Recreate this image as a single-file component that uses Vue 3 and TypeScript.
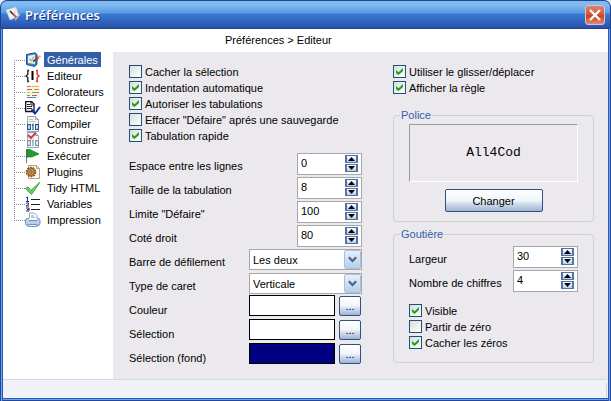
<script setup lang="ts">
import { reactive, ref } from 'vue'

const sections = [
  'Générales', 'Editeur', 'Colorateurs', 'Correcteur', 'Compiler', 'Construire',
  'Exécuter', 'Plugins', 'Tidy HTML', 'Variables', 'Impression',
]
const current = ref('Générales')

interface Option { id: string; label: string; on: boolean }
interface NumberField { id: string; label: string; value: number }

const editing = reactive<Option[]>([
  { id: 'hide-selection', label: 'Cacher la sélection', on: false },
  { id: 'auto-indent', label: 'Indentation automatique', on: true },
  { id: 'allow-tabs', label: 'Autoriser les tabulations', on: true },
  { id: 'clear-undo', label: 'Effacer "Défaire" aprés une sauvegarde', on: false },
  { id: 'quick-tab', label: 'Tabulation rapide', on: true },
])
const display = reactive<Option[]>([
  { id: 'drag-drop', label: 'Utiliser le glisser/déplacer', on: true },
  { id: 'ruler', label: 'Afficher la règle', on: true },
])
const gutter = reactive<Option[]>([
  { id: 'visible', label: 'Visible', on: true },
  { id: 'from-zero', label: 'Partir de zéro', on: false },
  { id: 'hide-zeros', label: 'Cacher les zéros', on: true },
])
const numbers = reactive<NumberField[]>([
  { id: 'spacing', label: 'Espace entre les lignes', value: 0 },
  { id: 'tab-size', label: 'Taille de la tabulation', value: 8 },
  { id: 'undo-limit', label: 'Limite "Défaire"', value: 100 },
  { id: 'right-side', label: 'Coté droit', value: 80 },
])
const gutterNumbers = reactive<NumberField[]>([
  { id: 'gutter-width', label: 'Largeur', value: 30 },
  { id: 'digits', label: 'Nombre de chiffres', value: 4 },
])
const choices = reactive([
  { id: 'scrollbar', label: 'Barre de défilement', value: 'Les deux', options: ['Les deux', 'Aucune'] },
  { id: 'caret', label: 'Type de caret', value: 'Verticale', options: ['Verticale', 'Horizontale'] },
])
const colors = reactive([
  { id: 'color', label: 'Couleur', value: '#ffffff' },
  { id: 'selection', label: 'Sélection', value: '#ffffff' },
  { id: 'selection-back', label: 'Sélection (fond)', value: '#000080' },
])
</script>

<template>
  <div class="window">
    <header class="titlebar">
      <svg class="app-icon" width="17" height="17" viewBox="0 0 17 17">
        <path d="M1 4 11 1l3 9-9 4z" fill="#eef1f5" stroke="#b9c2d0" stroke-width=".7" />
        <path d="m3 6 6 3 2-7" fill="none" stroke="#d5dae2" />
        <path d="m5 5 4 4" stroke="#333" stroke-width="1.6" />
        <path d="m8 8 5 5" stroke="#d4504a" stroke-width="1.8" />
        <path d="m15 8-5 6" stroke="#aebbd0" stroke-width="1.4" />
      </svg>
      <h1>Préférences</h1>
      <button class="close" type="button" aria-label="Fermer">
        <svg width="12" height="12" viewBox="0 0 12 12"><path d="m1 1 10 10M11 1 1 11" stroke="#fff" stroke-width="2.4" /></svg>
      </button>
    </header>
    <div class="body">
      <div class="crumb">Préférences &gt; Editeur</div>
      <div class="columns">
        <nav class="tree">
          <button
            v-for="(name, i) in sections" :key="name" type="button" class="node"
            :class="{ active: name === current }" @click="current = name"
          >
            <svg class="branch" width="11" height="16" viewBox="0 0 11 16" shape-rendering="crispEdges">
              <path :d="i === 0 ? 'M.5 8v8' : i === sections.length - 1 ? 'M.5 0v9' : 'M.5 0v16'" stroke="#8c8c8c" stroke-dasharray="1 1" />
              <path d="M0 8.5h11" stroke="#8c8c8c" stroke-dasharray="1 1" />
            </svg>
            <svg class="icon" width="16" height="16" viewBox="0 0 16 16">
              <g v-if="i === 0">
                <path d="M1.500 2.500 10 .800 12 2.500v9.500l-2 2.500-8.500-2z" fill="#3c86c8" stroke="#1c4f87" />
                <path d="M3 3.800 10 2.500v9.500L3 11z" fill="#e4f3ff" />
                <path d="m4.500 6.500 1.500 2.500L9 4.500" fill="none" stroke="#d1a03b" stroke-width="1.200" />
                <path d="m8 9.500 3.500-2.500" stroke="#444" stroke-width="1.600" /><path d="m11 7 2.500-1.700" stroke="#c33a2c" stroke-width="2.600" />
                <path d="m13 5.500 2.500-1.500" stroke="#e9a184" stroke-width="2" />
              </g>
              <g v-else-if="i === 1" fill="none">
                <path d="M4 2.500H2.800v4L1 8l1.800 1.500v4H4" stroke="#222" stroke-width="1.300" />
                <path d="M7.500 3v9" stroke="#000" stroke-width="2" />
                <path d="M11 2.500h1.200v4L14 8l-1.800 1.500v4H11" stroke="#d43030" stroke-width="1.400" />
              </g>
              <g v-else-if="i === 2">
                <path d="M1 1h14v13H1z" fill="#f6f3e8" />
                <path d="M2 2.500h4M9 5.500h5" stroke="#e17a3b" /><path d="M7 2.500h7M2 8.500h3" stroke="#e6ba43" />
                <path d="M2 5.500h5M7 11.500h5" stroke="#d9534e" /><path d="M7 8.500h7M2 11.500h3" stroke="#5bab62" />
                <path d="M2 13.500h9" stroke="#5487c5" />
              </g>
              <g v-else-if="i === 3">
                <path d="M.7 1.700h6L9 4v7.500H.7z" fill="#fff" stroke="#111" stroke-width="1.300" />
                <path d="M6 1.500V5h3" fill="none" stroke="#111" /><path d="M2 4.500h3M2 6.500h5M2 8.500h5" stroke="#222" />
                <path d="m6.500 9.500 3.500 4L15 7" fill="none" stroke="#172a9b" stroke-width="2" />
              </g>
              <g v-else-if="i === 4 || i === 5">
                <path d="M2.500.5h8l3 3v12h-11z" fill="#f2f6fb" stroke="#8da8c5" /><path d="M10.500.5v3h3" fill="#d3dfec" stroke="#8da8c5" />
                <path v-if="i === 4" d="M4 3.500h4M4 5.500h7" stroke="#e6bf68" />
                <path d="M2 8h12v6H2z" fill="#fff" />
                <g fill="none" :stroke="i === 4 ? '#31538e' : '#8491a1'" stroke-width="1.200">
                  <rect x="2.600" y="8.600" width="2.800" height="4.800" /><path d="m7 9.500 1-1v5.500" /><rect x="10.600" y="8.600" width="2.800" height="4.800" />
                </g>
                <path v-if="i === 5" d="m3 3 3 3 5-5.500" fill="none" stroke="#ce4033" stroke-width="2" />
              </g>
              <g v-else-if="i === 6">
                <path d="M1.500 1v14" stroke="#777" /><path d="M2 1.500c4-1 5 2 7 2l5 2.500-5 2c-3 2-5 0-7 1.500z" fill="#239b31" stroke="#14771f" stroke-width=".7" />
              </g>
              <g v-else-if="i === 7">
                <path d="M3.500 1.500h8l3 3v10h-11z" fill="#f8faff" stroke="#c3a06d" /><path d="M11.500 1.500v3h3" fill="none" stroke="#c3a06d" />
                <circle cx="6" cy="8" r="4.500" fill="#d99f4c" stroke="#835019" stroke-dasharray="1.800 1" stroke-width="1.600" />
                <circle cx="6" cy="8" r="3.300" fill="#dfab61" stroke="#8e571f" /><circle cx="6" cy="8" r="1.200" fill="#fff" stroke="#5f3811" />
              </g>
              <path v-else-if="i === 8" d="M.5 8.500 3 7l3 3.500L15 2 6.500 14.500z" fill="#6ed05c" stroke="#3da540" />
              <g v-else-if="i === 9">
                <path d="M6 3.500h9M6 8.500h9M6 13.500h9" stroke="#222" /><path d="M2.500 1v4M1 2l1.500-1M1 5.500h3M1 7h2.500v1.500L1 10h3M1 12h3v3H1M2 13.500h2" fill="none" stroke="#282d6a" />
              </g>
              <g v-else>
                <path d="M4.500 1h5l2.500 2.500V8h-7.500z" fill="#fafdff" stroke="#8ca5c2" /><path d="M6 4h3M6 6h5" stroke="#6e98c8" />
                <rect x=".5" y="6.500" width="14.500" height="7" rx="2" fill="#bad0e8" stroke="#6f91b7" />
                <path d="M4 6h8v3H4z" fill="#fff" /><path d="M4 8.500h8" stroke="#6487af" /><path d="M3 12.500h9v2H3z" fill="#e8f2fc" stroke="#7795b8" />
              </g>
            </svg>
            <span class="node-label">{{ name }}</span>
          </button>
        </nav>
        <main class="panel">
          <section class="left">
            <div class="checks">
              <label v-for="o in editing" :key="o.id" class="check"><input v-model="o.on" type="checkbox">{{ o.label }}</label>
            </div>
            <div class="fields">
              <div v-for="f in numbers" :key="f.id" class="field">
                <label :for="f.id">{{ f.label }}</label>
                <div class="spin">
                  <input :id="f.id" v-model.number="f.value" type="text">
                  <div class="steps">
                    <button type="button" aria-label="Augmenter" @click="f.value++"><i class="up" /></button>
                    <button type="button" aria-label="Diminuer" @click="f.value--"><i class="down" /></button>
                  </div>
                </div>
              </div>
              <div v-for="c in choices" :key="c.id" class="field">
                <label :for="c.id">{{ c.label }}</label>
                <div class="combo">
                  <select :id="c.id" v-model="c.value"><option v-for="o in c.options" :key="o">{{ o }}</option></select>
                  <span class="arrow"><svg width="9" height="7" viewBox="0 0 9 7"><path d="m.8 1.300 3.700 3.700 3.700-3.700" fill="none" stroke="#4d6185" stroke-width="2.200" /></svg></span>
                </div>
              </div>
              <div v-for="c in colors" :key="c.id" class="field color">
                <label :for="c.id">{{ c.label }}</label>
                <div class="pick">
                  <span class="well" :style="{ background: c.value }" />
                  <button :id="c.id" type="button" class="btn more">...</button>
                </div>
              </div>
            </div>
          </section>
          <section class="right">
            <div class="checks">
              <label v-for="o in display" :key="o.id" class="check"><input v-model="o.on" type="checkbox">{{ o.label }}</label>
            </div>
            <fieldset class="police">
              <legend>Police</legend>
              <div class="preview">All4Cod</div>
              <button type="button" class="btn change">Changer</button>
            </fieldset>
            <fieldset class="gutter">
              <legend>Goutière</legend>
              <div v-for="f in gutterNumbers" :key="f.id" class="field">
                <label :for="f.id">{{ f.label }}</label>
                <div class="spin">
                  <input :id="f.id" v-model.number="f.value" type="text">
                  <div class="steps">
                    <button type="button" aria-label="Augmenter" @click="f.value++"><i class="up" /></button>
                    <button type="button" aria-label="Diminuer" @click="f.value--"><i class="down" /></button>
                  </div>
                </div>
              </div>
              <div class="checks">
                <label v-for="o in gutter" :key="o.id" class="check"><input v-model="o.on" type="checkbox">{{ o.label }}</label>
              </div>
            </fieldset>
          </section>
        </main>
      </div>
      <footer class="status"><span class="grip" /></footer>
    </div>
  </div>
</template>

<style>
body { background: #e9eef6; }
</style>

<style scoped>
* { box-sizing: border-box; }
.window {
  min-height: 100vh;
  display: flex;
  flex-direction: column;
  border-radius: 7px 7px 0 0;
  overflow: hidden;
  background: #3b74d6;
  font: 11px/16px "Liberation Sans", Arial, sans-serif;
  color: #000;
}
button, input, select { font: inherit; color: inherit; margin: 0; padding: 0; }
.titlebar {
  height: 29px;
  display: flex;
  align-items: center;
  padding: 0 5px 0 4px;
  border: 1px solid #25438c;
  border-radius: 7px 7px 0 0;
  background: linear-gradient(#7db8f0 0, #82bdf0 3px, #5b9ae4 12px, #397bd0 13px, #3570c8 17px, #2950aa 27px);
}
.app-icon { margin-right: 3px; }
h1 {
  flex: 1;
  margin: 0;
  font: 600 13px/18px "Open Sans", "Noto Sans", sans-serif;
  color: #fff;
  text-shadow: 1px 1px 0 #173a86;
}
.close {
  width: 20px;
  height: 20px;
  display: grid;
  place-items: center;
  border: 1px solid #d9c3d2;
  border-radius: 3px;
  background: linear-gradient(#df8272, #d3583c 45%, #c9401c 55%, #e08b72);
}
.body {
  flex: 1;
  display: flex;
  flex-direction: column;
  padding: 0 3px 3px;
  background: linear-gradient(90deg, #1f479c 0 1px, #6da2ee 1px 2px, #2c58b4 2px 3px, transparent 3px calc(100% - 3px), #2c58b4 calc(100% - 3px) calc(100% - 2px), #6da2ee calc(100% - 2px) calc(100% - 1px), #1f479c calc(100% - 1px)), linear-gradient(0deg, #1f479c 0 1px, #6da2ee 1px 2px, #2c58b4 2px 3px, #fff 3px);
}
.crumb { height: 23px; padding: 3px 0 0 222px; background: #fff; }
.columns { flex: 1; display: flex; background: #fff; }
.tree { width: 110px; padding-left: 11px; }
.node { display: flex; height: 16px; border: 0; background: none; line-height: 14px; text-align: left; }
.node-label { height: 15px; margin-left: 3px; padding: 1px 3px 0; white-space: nowrap; }
.active .node-label { background: #335ea8; color: #fff; }
.panel { flex: 1; display: flex; gap: 31px; padding: 12px 14px 10px 16px; background: #ebe9ed; }
.left { width: 233px; }
.right { flex: 1; }
.check { display: flex; align-items: center; gap: 3px; height: 16px; white-space: nowrap; }
.check input {
  appearance: none;
  width: 13px;
  height: 13px;
  margin-bottom: 1px;
  display: grid;
  place-items: center;
  border: 1px solid #1c5180;
  background: linear-gradient(135deg, #dcdcd7, #fff);
}
.check input:checked::before {
  content: "";
  width: 7px;
  height: 7px;
  background: #21a121;
  clip-path: polygon(0 29%, 36% 60%, 100% 0, 100% 42%, 36% 100%, 0 70%);
}
.fields { margin-top: 9px; }
.field { display: flex; justify-content: space-between; align-items: flex-start; height: 24px; }
.field > label { padding-top: 5px; white-space: nowrap; }
.spin {
  width: 65px;
  height: 22px;
  display: flex;
  border: 1px solid #a7a6aa;
  background: #fff;
  padding: 1px 3px;
}
.spin input { flex: 1; min-width: 0; height: 16px; border: 0; outline: 0; background: none; }
.steps { width: 13px; display: grid; grid-template-rows: 8px 8px; gap: 1px; }
.steps button {
  display: grid;
  place-items: center;
  border: 1px solid #5373a4;
  border-width: 1px 2px;
  background: linear-gradient(#fff, #b9cbe6);
}
.up, .down { width: 7px; height: 4px; background: #000; clip-path: polygon(50% 0, 100% 100%, 0 100%); }
.down { clip-path: polygon(0 0, 100% 0, 50% 100%); }
.combo { width: 113px; height: 21px; display: grid; border: 1px solid #a7a6aa; background: #fff; }
.combo select {
  grid-area: 1 / 1;
  appearance: none;
  border: 0;
  padding: 0 18px 0 3px;
  background: none;
}
.arrow {
  grid-area: 1 / 1;
  justify-self: end;
  width: 17px;
  display: grid;
  place-items: center;
  border: 1px solid #a9c0dc;
  border-radius: 2px;
  background: linear-gradient(#e6f1fc, #b5cfea);
  pointer-events: none;
}
.pick { width: 113px; height: 21px; display: flex; gap: 4px; align-items: center; margin-top: -2px; }
.well { width: 86px; height: 21px; border: 1px solid #000; }
.btn {
  border: 1px solid #31517f;
  border-radius: 2px;
  background: linear-gradient(#fff, #f0f5f9 50%, #d3deec 65%, #9eb3d5);
}
.more { width: 22px; height: 20px; line-height: 16px; }
fieldset { margin: 0; border: 1px solid #d0d0cf; border-radius: 4px; min-width: 0; }
legend { height: 16px; margin-left: -9px; padding: 0 1px; color: #335ea8; }
.police {
  margin-top: 11px;
  padding: 1px 15px 9px;
  display: flex;
  flex-direction: column;
  align-items: center;
}
.preview {
  align-self: stretch;
  height: 58px;
  display: grid;
  place-items: center;
  border: 1px solid;
  border-color: #9d9da1 #fff #fff #9d9da1;
  font: 13px/16px "Liberation Mono", monospace;
}
.change { width: 98px; height: 23px; margin-top: 7px; }
.gutter { margin-top: 4px; padding: 4px 15px 11px; }
.gutter .checks { margin-top: 9px; }
.status { height: 19px; display: flex; justify-content: flex-end; padding: 3px 1px 1px; border-top: 1px solid #d8d7dc; background: #eff3f9; }
.grip { width: 1px; background: #cfd2d8; }
</style>
